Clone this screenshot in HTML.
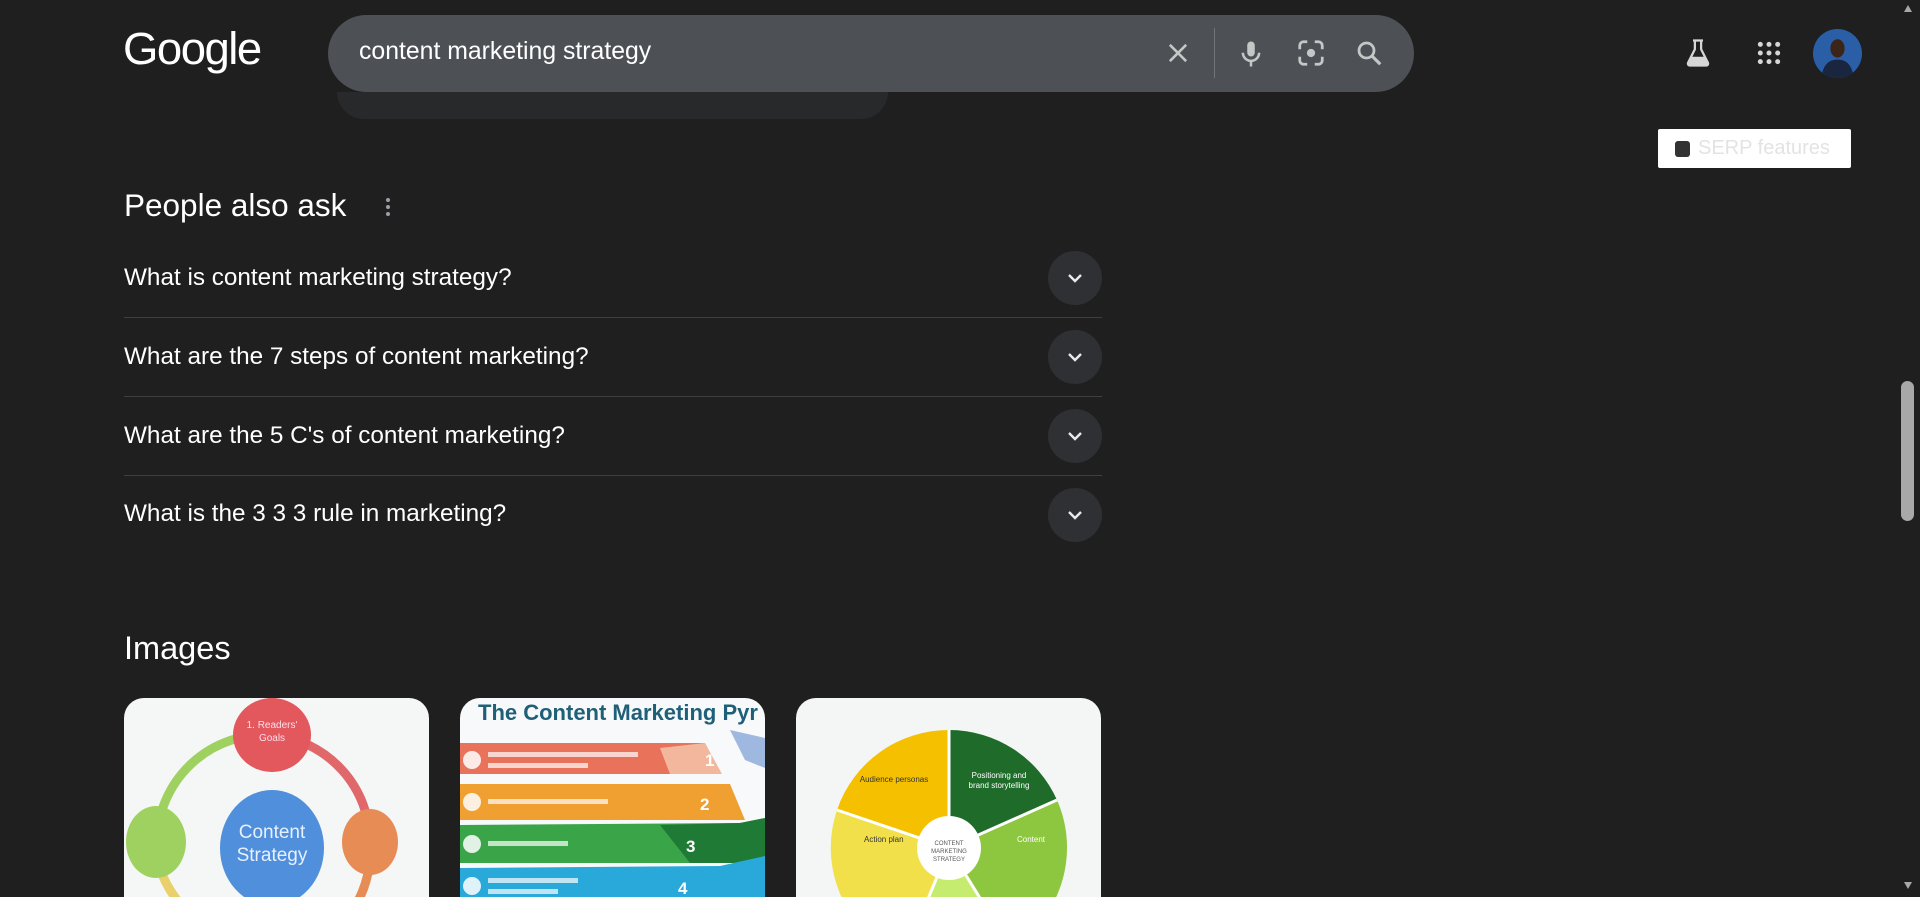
<!DOCTYPE html>
<html><head><meta charset="utf-8"><style>
*{margin:0;padding:0;box-sizing:border-box}
html{overflow:hidden;width:1920px;height:897px}
body{width:1920px;height:897px;background:#1f1f1f;font-family:"Liberation Sans",Arial,sans-serif;color:#e8eaed;overflow:hidden;position:relative}
.abs{position:absolute}
.logo{left:123px;top:23px;font-size:45.5px;color:#fff;letter-spacing:-1.5px;font-weight:400}
.bar{left:328px;top:15px;width:1086px;height:77px;border-radius:39px;background:#4d5156}
.q{left:359px;top:38px;font-size:24.8px;color:#fff}
.under{left:337px;top:92px;width:551px;height:27px;background:#28292b;border-radius:0 0 28px 28px}
.serp{left:1658px;top:129px;width:193px;height:39px;background:#fff;border-radius:2px}
.serp .cb{position:absolute;left:17px;top:12px;width:15px;height:16px;background:#333;border-radius:3px}
.serp span{position:absolute;left:40px;top:8px;font-size:20px;color:#e3e3e3}
.h{font-size:31.5px;color:#fff}
.qa{left:124px;font-size:24.3px;color:#fff}
.chev{left:1048px;width:54px;height:54px;border-radius:50%;background:#2f3033}
.div{left:124px;width:978px;height:1px;background:#3c4043}
.card{top:698px;width:305px;height:199px;border-radius:20px 20px 0 0;overflow:hidden}
.sb{left:1897px;top:0;width:23px;height:897px;background:#1f1f1f}
</style></head><body>
<div class="abs logo">Google</div>
<div class="abs under"></div>
<div class="abs bar"></div>
<div class="abs q">content marketing strategy</div>
<svg class="abs" style="left:1164px;top:39px" width="28" height="28" viewBox="0 0 24 24"><path d="M5 5L19 19M19 5L5 19" stroke="#c4c7c5" stroke-width="2.2"/></svg>
<div class="abs" style="left:1214px;top:28px;width:1px;height:50px;background:#70757a"></div>
<svg class="abs" style="left:1236px;top:38px" width="30" height="32" viewBox="0 0 24 24"><rect x="9" y="2" width="6" height="12" rx="3" fill="#c4c7c5"/><path d="M5.5 11a6.5 6.5 0 0 0 13 0" stroke="#c4c7c5" stroke-width="2" fill="none"/><path d="M12 17.5V22" stroke="#c4c7c5" stroke-width="2"/></svg>
<svg class="abs" style="left:1296px;top:38px" width="30" height="30" viewBox="0 0 24 24"><path d="M3 9V6a3 3 0 0 1 3-3h3M15 3h3a3 3 0 0 1 3 3v3M21 15v3a3 3 0 0 1-3 3h-3M9 21H6a3 3 0 0 1-3-3v-3" stroke="#c4c7c5" stroke-width="2.2" fill="none"/><circle cx="12" cy="12" r="3.3" fill="#c4c7c5"/></svg>
<svg class="abs" style="left:1354px;top:38px" width="30" height="30" viewBox="0 0 24 24"><circle cx="10" cy="10" r="6" stroke="#c4c7c5" stroke-width="2.2" fill="none"/><path d="M14.5 14.5L21 21" stroke="#c4c7c5" stroke-width="2.5"/></svg>
<svg class="abs" style="left:1683px;top:37px" width="30" height="32" viewBox="0 0 24 24"><path d="M8 2h8M9.5 2v7L4 20a1.5 1.5 0 0 0 1.3 2h13.4A1.5 1.5 0 0 0 20 20L14.5 9V2" stroke="#d6d6d6" stroke-width="1.8" fill="none"/><path d="M6.5 15h11L20 20.5a1 1 0 0 1-1 1.5H5a1 1 0 0 1-1-1.5z" fill="#d6d6d6"/></svg>
<svg class="abs" style="left:1756px;top:40px" width="26" height="26" viewBox="0 0 24 24" fill="#d6d6d6"><circle cx="4" cy="4" r="2.3"/><circle cx="12" cy="4" r="2.3"/><circle cx="20" cy="4" r="2.3"/><circle cx="4" cy="12" r="2.3"/><circle cx="12" cy="12" r="2.3"/><circle cx="20" cy="12" r="2.3"/><circle cx="4" cy="20" r="2.3"/><circle cx="12" cy="20" r="2.3"/><circle cx="20" cy="20" r="2.3"/></svg>
<svg class="abs" style="left:1813px;top:29px" width="49" height="49" viewBox="0 0 48 48"><defs><clipPath id="av"><circle cx="24" cy="24" r="24"/></clipPath></defs><g clip-path="url(#av)"><rect width="48" height="48" fill="#2a5fa8"/><path d="M8 48c2-14 8-18 16-18s14 4 16 18z" fill="#1a2540"/><ellipse cx="24" cy="19" rx="7" ry="9" fill="#3b2418"/></g></svg>
<div class="abs serp"><div class="cb"></div><span>SERP features</span></div>

<div class="abs h" style="left:124px;top:187px">People also ask</div>
<svg class="abs" style="left:383px;top:196px" width="10" height="22" viewBox="0 0 10 22" fill="#9aa0a6"><circle cx="5" cy="4" r="2"/><circle cx="5" cy="11" r="2"/><circle cx="5" cy="18" r="2"/></svg>

<div class="abs qa" style="top:264px">What is content marketing strategy?</div>
<div class="abs qa" style="top:343px">What are the 7 steps of content marketing?</div>
<div class="abs qa" style="top:422px">What are the 5 C's of content marketing?</div>
<div class="abs qa" style="top:500px">What is the 3 3 3 rule in marketing?</div>
<div class="abs div" style="top:317px"></div>
<div class="abs div" style="top:396px"></div>
<div class="abs div" style="top:475px"></div>
<div class="abs chev" style="top:251px"></div>
<div class="abs chev" style="top:330px"></div>
<div class="abs chev" style="top:409px"></div>
<div class="abs chev" style="top:488px"></div>
<svg class="abs" style="left:1063px;top:266px" width="24" height="24" viewBox="0 0 24 24"><path d="M6 9l6 6 6-6" stroke="#e8eaed" stroke-width="2.4" fill="none"/></svg>
<svg class="abs" style="left:1063px;top:345px" width="24" height="24" viewBox="0 0 24 24"><path d="M6 9l6 6 6-6" stroke="#e8eaed" stroke-width="2.4" fill="none"/></svg>
<svg class="abs" style="left:1063px;top:424px" width="24" height="24" viewBox="0 0 24 24"><path d="M6 9l6 6 6-6" stroke="#e8eaed" stroke-width="2.4" fill="none"/></svg>
<svg class="abs" style="left:1063px;top:503px" width="24" height="24" viewBox="0 0 24 24"><path d="M6 9l6 6 6-6" stroke="#e8eaed" stroke-width="2.4" fill="none"/></svg>

<div class="abs h" style="left:124px;top:630px;font-size:32.5px">Images</div>

<div class="abs card" style="left:124px;background:#f5f6f6">
<svg width="305" height="199" viewBox="0 0 305 199">
<path d="M148 37 A108 108 0 0 1 246 144" stroke="#e0686a" stroke-width="9" fill="none"/>
<path d="M148 37 A108 108 0 0 0 33 144" stroke="#9fd160" stroke-width="9" fill="none"/>
<path d="M33 160 A108 108 0 0 0 60 210" stroke="#e9d06a" stroke-width="9" fill="none"/>
<path d="M246 160 A108 108 0 0 1 230 210" stroke="#e58d54" stroke-width="9" fill="none"/>
<ellipse cx="148" cy="37" rx="39" ry="37" fill="#e2585c"/>
<ellipse cx="148" cy="150" rx="52" ry="58" fill="#4f8fdb"/>
<ellipse cx="246" cy="144" rx="28" ry="33" fill="#e88c56"/>
<ellipse cx="32" cy="144" rx="30" ry="36" fill="#9fd160"/>
<text x="148" y="30" font-size="10" fill="#fde" text-anchor="middle" font-family="Liberation Sans">1. Readers'</text>
<text x="148" y="43" font-size="10" fill="#fde" text-anchor="middle" font-family="Liberation Sans">Goals</text>
<text x="148" y="140" font-size="19" fill="#e8f0ff" text-anchor="middle" font-family="Liberation Sans">Content</text>
<text x="148" y="163" font-size="19" fill="#e8f0ff" text-anchor="middle" font-family="Liberation Sans">Strategy</text>
</svg></div>

<div class="abs card" style="left:460px;background:#f7f9fa">
<svg width="305" height="199" viewBox="0 0 305 199">
<text x="18" y="22" font-size="22" font-weight="bold" fill="#1f5f78" font-family="Liberation Sans">The Content Marketing Pyr</text>
<polygon points="270,32 305,40 305,70 285,62" fill="#9fb8df"/>
<polygon points="0,45 245,45 260,76 0,76" fill="#e8735a"/>
<polygon points="200,50 245,45 262,76 210,76" fill="#f3b79e"/>
<polygon points="0,86 270,86 285,122 0,122" fill="#f0a030"/>
<polygon points="0,127 280,125 305,120 305,165 0,165" fill="#3aa448"/>
<polygon points="200,127 280,125 305,120 305,165 230,165" fill="#1f7a35"/>
<polygon points="0,170 260,168 305,158 305,210 0,210" fill="#29a9d9"/>
<g fill="#fff" font-family="Liberation Sans" font-weight="bold" font-size="17"><text x="245" y="68">1</text><text x="240" y="112">2</text><text x="226" y="154">3</text><text x="218" y="196">4</text></g>
<g fill="#fff" opacity=".85"><circle cx="12" cy="62" r="9"/><circle cx="12" cy="104" r="9"/><circle cx="12" cy="146" r="9"/><circle cx="12" cy="188" r="9"/></g>
<g fill="#fff" opacity=".7"><rect x="28" y="54" width="150" height="5"/><rect x="28" y="65" width="100" height="5"/><rect x="28" y="101" width="120" height="5"/><rect x="28" y="143" width="80" height="5"/><rect x="28" y="180" width="90" height="5"/><rect x="28" y="191" width="70" height="5"/></g>
</svg></div>

<div class="abs card" style="left:796px;background:#f3f6f5">
<svg width="305" height="199" viewBox="0 0 305 199">
<g transform="translate(153,150)">
<path d="M0 0 L0 -118 A118 118 0 0 1 108 -48 Z" fill="#1e6b2a"/>
<path d="M0 0 L108 -48 A118 118 0 0 1 62 100 Z" fill="#8dc63f"/>
<path d="M0 0 L62 100 A118 118 0 0 1 -45 109 Z" fill="#c5ec6e"/>
<path d="M0 0 L-45 109 A118 118 0 0 1 -112 -38 Z" fill="#f2e04a"/>
<path d="M0 0 L-112 -38 A118 118 0 0 1 0 -118 Z" fill="#f5c000"/>
<path d="M0 0 L0 -118 M0 0 L108 -48 M0 0 L62 100 M0 0 L-45 109 M0 0 L-112 -38" stroke="#fff" stroke-width="3"/>
<circle r="32" fill="#fff"/>
<text y="-3" font-size="6" text-anchor="middle" fill="#555" font-family="Liberation Sans">CONTENT</text>
<text y="5" font-size="6" text-anchor="middle" fill="#555" font-family="Liberation Sans">MARKETING</text>
<text y="13" font-size="6" text-anchor="middle" fill="#555" font-family="Liberation Sans">STRATEGY</text>
<text x="-55" y="-66" font-size="8" text-anchor="middle" fill="#333" font-family="Liberation Sans">Audience personas</text>
<text x="50" y="-70" font-size="8" text-anchor="middle" fill="#fff" font-family="Liberation Sans">Positioning and</text>
<text x="50" y="-60" font-size="8" text-anchor="middle" fill="#fff" font-family="Liberation Sans">brand storytelling</text>
<text x="-85" y="-6" font-size="8" fill="#333" font-family="Liberation Sans">Action plan</text>
<text x="82" y="-6" font-size="8" text-anchor="middle" fill="#fff" font-family="Liberation Sans">Content</text>
</g></svg></div>

<div class="abs sb"></div>
<svg class="abs" style="left:1902px;top:3px" width="12" height="12" viewBox="0 0 12 12"><path d="M6 2L10 9H2z" fill="#a8a8a8"/></svg>
<svg class="abs" style="left:1902px;top:879px" width="12" height="12" viewBox="0 0 12 12"><path d="M6 10L10 3H2z" fill="#a8a8a8"/></svg>
<div class="abs" style="left:1901px;top:381px;width:13px;height:140px;border-radius:7px;background:#a8a8a8"></div>
</body></html>
